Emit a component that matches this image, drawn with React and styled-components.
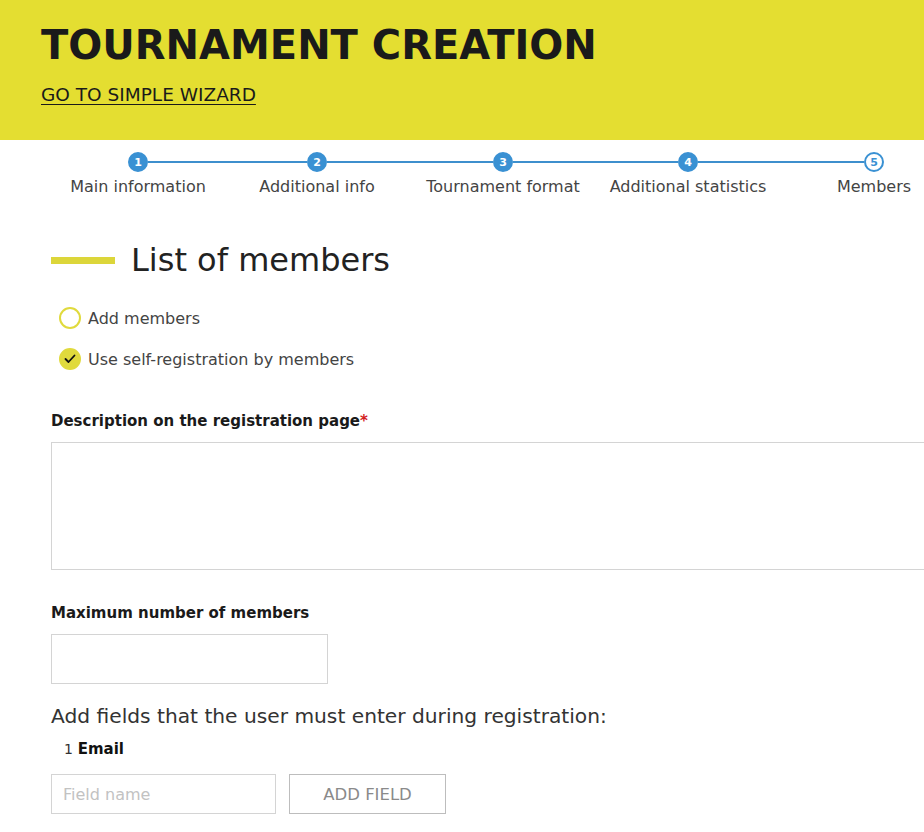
import React from "react";
import styled, { createGlobalStyle } from "styled-components";

const Global = createGlobalStyle`
  html, body { margin: 0; padding: 0; background: #fff; overflow: hidden; }
  body { font-family: "DejaVu Sans", "Liberation Sans", sans-serif; color: #333; }
  * { box-sizing: border-box; }
`;

const Page = styled.div`
  width: 924px;
  min-height: 832px;
`;

const Header = styled.header`
  background: #e4de31;
  height: 140px;
  padding: 25px 41px 0;
`;

const Title = styled.h1`
  margin: 0;
  font-size: 40px;
  line-height: 40px;
  font-weight: 700;
  color: #1a1a1a;
`;

const WizardLink = styled.a`
  display: inline-block;
  margin-top: 21px;
  font-size: 18.5px;
  line-height: 18.5px;
  color: #1a1a1a;
  text-decoration: underline;
  text-underline-offset: 3px;
  text-decoration-thickness: 1px;
`;

const Steps = styled.div`
  display: flex;
  padding: 12px 0 0 47px;
  width: 924px;
  overflow: hidden;
`;

const Step = styled.div`
  width: ${(p) => p.$w}px;
  flex: none;
  display: flex;
  flex-direction: column;
  align-items: center;
`;

const StepTrack = styled.div`
  display: flex;
  align-items: center;
  width: 100%;
  height: 20px;
`;

const Line = styled.div`
  flex: 1;
  height: 2px;
  background: ${(p) => (p.$hidden ? "transparent" : "#3d8fcd")};
`;

const Dot = styled.div`
  width: 20px;
  height: 20px;
  border-radius: 50%;
  flex: none;
  display: flex;
  align-items: center;
  justify-content: center;
  font-size: 11px;
  font-weight: 700;
  background: ${(p) => (p.$active ? "#fff" : "#3a91d3")};
  color: ${(p) => (p.$active ? "#3a91d3" : "#fff")};
  border: 2px solid #3a91d3;
`;

const StepLabel = styled.div`
  margin-top: 5px;
  font-size: 16px;
  line-height: 20px;
  color: #444;
  white-space: nowrap;
`;

const Content = styled.main`
  padding: 0 0 0 51px;
`;

const SectionHead = styled.div`
  display: flex;
  align-items: center;
  gap: 16px;
  margin-top: 43px;
`;

const Bar = styled.span`
  width: 64px;
  height: 7px;
  background: #dcd63a;
`;

const SectionTitle = styled.h2`
  margin: 0;
  font-size: 32px;
  line-height: 40px;
  font-weight: 400;
  color: #222;
`;

const Options = styled.div`
  display: flex;
  flex-direction: column;
  gap: 19px;
  margin-top: 27px;
  padding-left: 8px;
`;

const Option = styled.label`
  display: flex;
  align-items: center;
  gap: 7px;
  height: 22px;
  font-size: 16px;
  color: #444;
`;

const Radio = styled.span`
  width: 22px;
  height: 22px;
  border-radius: 50%;
  border: 2px solid #e0da3d;
  background: ${(p) => (p.$checked ? "#e0da3d" : "#fff")};
  display: flex;
  align-items: center;
  justify-content: center;
`;

const FieldLabel = styled.div`
  margin-top: ${(p) => p.$mt}px;
  font-size: 15px;
  line-height: 20px;
  font-weight: 700;
  color: #1a1a1a;
`;

const Required = styled.span`
  color: #d32020;
`;

const TextArea = styled.textarea`
  display: block;
  margin-top: 11px;
  width: 874px;
  height: 128px;
  border: 1px solid #d4d4d4;
  border-right: none;
  resize: none;
  font-family: inherit;
`;

const Input = styled.input`
  display: block;
  width: ${(p) => p.$w}px;
  height: ${(p) => p.$h}px;
  margin-top: ${(p) => p.$mt || 0}px;
  border: 1px solid #d4d4d4;
  padding: 0 11px;
  font-family: inherit;
  font-size: 16px;
  color: #333;
  &::placeholder { color: #c2c2c2; }
`;

const Prompt = styled.div`
  margin-top: 19px;
  font-size: 20.2px;
  line-height: 26px;
  color: #333;
`;

const FieldItem = styled.div`
  margin-top: 10px;
  padding-left: 13px;
  font-size: 15px;
  line-height: 20px;
  color: #333;
`;

const Num = styled.span`
  font-size: 14px;
`;

const FieldName = styled.b`
  font-weight: 700;
  color: #111;
`;

const AddRow = styled.div`
  display: flex;
  gap: 13px;
  margin-top: 15px;
`;

const AddButton = styled.button`
  width: 157px;
  height: 40px;
  border: 1px solid #bdbdbd;
  background: #fff;
  color: #8a8a8a;
  font-family: inherit;
  font-size: 16.5px;
`;

const steps = [
  { label: "Main information", w: 182 },
  { label: "Additional info", w: 176 },
  { label: "Tournament format", w: 196 },
  { label: "Additional statistics", w: 174 },
  { label: "Members", w: 198 },
];

export default function App() {
  return (
    <Page>
      <Global />
      <Header>
        <Title>TOURNAMENT CREATION</Title>
        <WizardLink href="#">GO TO SIMPLE WIZARD</WizardLink>
      </Header>
      <Steps>
        {steps.map((s, i) => (
          <Step key={s.label} $w={s.w}>
            <StepTrack>
              <Line $hidden={i === 0} />
              <Dot $active={i === steps.length - 1}>{i + 1}</Dot>
              <Line $hidden={i === steps.length - 1} />
            </StepTrack>
            <StepLabel>{s.label}</StepLabel>
          </Step>
        ))}
      </Steps>
      <Content>
        <SectionHead>
          <Bar />
          <SectionTitle>List of members</SectionTitle>
        </SectionHead>
        <Options>
          <Option>
            <Radio />
            Add members
          </Option>
          <Option>
            <Radio $checked>
              <svg width="12" height="10" viewBox="0 0 12 10">
                <polyline points="1.5,5 4.5,8 10.5,1.5" fill="none" stroke="#111" strokeWidth="1.8" strokeLinecap="round" strokeLinejoin="round" />
              </svg>
            </Radio>
            Use self-registration by members
          </Option>
        </Options>
        <FieldLabel $mt={41}>
          Description on the registration page<Required>*</Required>
        </FieldLabel>
        <TextArea />
        <FieldLabel $mt={33}>Maximum number of members</FieldLabel>
        <Input $w={277} $h={50} $mt={11} />
        <Prompt>Add fields that the user must enter during registration:</Prompt>
        <FieldItem>
          <Num>1</Num> <FieldName>Email</FieldName>
        </FieldItem>
        <AddRow>
          <Input $w={225} $h={40} placeholder="Field name" />
          <AddButton>ADD FIELD</AddButton>
        </AddRow>
      </Content>
    </Page>
  );
}
